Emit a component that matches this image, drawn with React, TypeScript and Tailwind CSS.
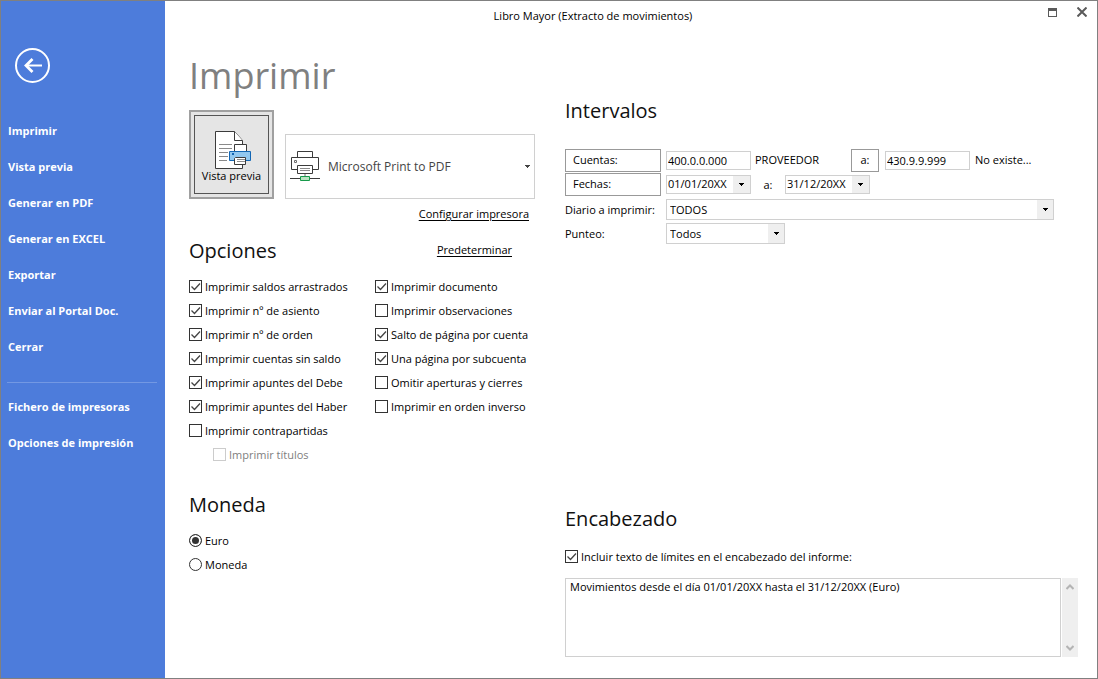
import { useState } from "react"
import type { ReactNode } from "react"

const menuItems = [
  "Imprimir",
  "Vista previa",
  "Generar en PDF",
  "Generar en EXCEL",
  "Exportar",
  "Enviar al Portal Doc.",
  "Cerrar",
]

const setupItems = ["Fichero de impresoras", "Opciones de impresión"]

const leftOptions = [
  { id: "saldos", label: "Imprimir saldos arrastrados", checked: true },
  { id: "asiento", label: "Imprimir nº de asiento", checked: true },
  { id: "orden", label: "Imprimir nº de orden", checked: true },
  { id: "sinsaldo", label: "Imprimir cuentas sin saldo", checked: true },
  { id: "debe", label: "Imprimir apuntes del Debe", checked: true },
  { id: "haber", label: "Imprimir apuntes del Haber", checked: true },
  { id: "contrapartidas", label: "Imprimir contrapartidas", checked: false },
]

const rightOptions = [
  { id: "documento", label: "Imprimir documento", checked: true },
  { id: "observaciones", label: "Imprimir observaciones", checked: false },
  { id: "salto", label: "Salto de página por cuenta", checked: true },
  { id: "subcuenta", label: "Una página por subcuenta", checked: true },
  { id: "omitir", label: "Omitir aperturas y cierres", checked: false },
  { id: "inverso", label: "Imprimir en orden inverso", checked: false },
]

const Arrow = ({ className }: { className?: string }) => (
  <svg width="5" height="3" viewBox="0 0 5 3" className={className} shapeRendering="crispEdges" aria-hidden="true">
    <path d="M0 0h5v1H4v1H3v1H2V2H1V1H0z" fill="currentColor" />
  </svg>
)

const PreviewIcon = () => (
  <svg width="37" height="39" viewBox="0 0 37 39" fill="none" aria-hidden="true">
    <path d="M.5.5h19l8 9v28H.5z" fill="#fff" stroke="#3b3b3b" />
    <path d="M19.5.5v9h8" fill="#fff" stroke="#3b3b3b" />
    <path d="M4 13.5h13M4 17.5h13M4 21.5h9M4 25.5h9M4 29.5h8" stroke="#8a8a8a" />
    <path d="M19.5 20.5v-7h12v7" fill="#fff" stroke="#3b3b3b" />
    <path d="M14.500 20.500h21v9h-21z" fill="#92c8ef" stroke="#1266b4" />
    <path d="M17 22h2v2h-2z" fill="#1266b4" />
    <path d="M20.5 26.500h10v7h-11v-6z" fill="#fff" stroke="#3b3b3b" />
    <path d="M22 28.5h8M22 30.5h8" stroke="#8a8a8a" />
  </svg>
)

const PrinterIcon = () => (
  <svg width="30" height="31" viewBox="0 0 30 31" fill="none" aria-hidden="true">
    <path d="M7.500 6.500v-6h15v6" fill="#fff" stroke="#3b3b3b" />
    <path d="M7 18.500H1.500v-12h27v12H23" fill="#fff" stroke="#3b3b3b" />
    <path d="M4.500 9.500h2v2h-2z" stroke="#6e6e6e" />
    <path d="M7.500 14.500h15v8h-15z" fill="#fff" stroke="#3b3b3b" />
    <path d="M10 17.500h10M10 19.500h10" stroke="#8a8a8a" />
    <path d="M15 23v2" stroke="#b5b5b5" strokeWidth="2" />
    <path d="M0 27.500h30" stroke="#3b3b3b" />
    <path d="M10.500 25.500h9v4h-9z" fill="#b9e3c1" stroke="#179a4b" />
  </svg>
)

const Check = ({
  id,
  label,
  defaultChecked,
  disabled,
}: {
  id: string
  label: string
  defaultChecked?: boolean
  disabled?: boolean
}) => (
  <div className="flex h-6 items-center gap-[3px]">
    <span className="mb-px grid size-[13px]">
      <input
        id={id}
        type="checkbox"
        defaultChecked={defaultChecked}
        disabled={disabled}
        className="peer col-start-1 row-start-1 size-[13px] appearance-none border border-[#333] bg-white disabled:border-[#ccc]"
      />
      <svg
        viewBox="0 0 13 13"
        className="pointer-events-none invisible col-start-1 row-start-1 size-[13px] peer-checked:visible"
        aria-hidden="true"
      >
        <path d="M2.500 6.500l3 3 5.500-6" fill="none" stroke="#444" strokeWidth="1.300" />
      </svg>
    </span>
    <label htmlFor={id} className={disabled ? "whitespace-nowrap text-[#808080]" : "whitespace-nowrap"}>
      {label}
    </label>
  </div>
)

const Radio = ({ id, label, defaultChecked }: { id: string; label: string; defaultChecked?: boolean }) => (
  <div className="flex h-6 items-center gap-[3px]">
    <input
      id={id}
      name="moneda"
      type="radio"
      defaultChecked={defaultChecked}
      className="mb-px size-[13px] appearance-none rounded-full border border-[#333] bg-white checked:bg-[#333] checked:shadow-[inset_0_0_0_2px_#fff]"
    />
    <label htmlFor={id}>{label}</label>
  </div>
)

const Heading = ({ children }: { children: ReactNode }) => (
  <h2 className="h-8 text-xl leading-8 text-[#111]">{children}</h2>
)

const DateBox = ({ label, defaultValue }: { label: string; defaultValue: string }) => (
  <div className="flex h-[19px] w-[85px] border border-[#d0d0d0]">
    <input aria-label={label} defaultValue={defaultValue} className="w-0 flex-1 pl-px outline-none" />
    <button type="button" aria-label={`Abrir ${label}`} className="grid w-[17px] place-items-center bg-[#efefef]">
      <Arrow />
    </button>
  </div>
)

const SelectBox = ({ id, value, className }: { id: string; value: string; className: string }) => (
  <div className={`mb-px grid h-[21px] grid-cols-[1fr_16px] border border-[#d0d0d0] ${className}`}>
    <select id={id} className="col-span-2 col-start-1 row-start-1 appearance-none bg-transparent pl-[3px] outline-none">
      <option>{value}</option>
    </select>
    <span className="pointer-events-none col-start-2 row-start-1 grid place-items-center bg-[#efefef]">
      <Arrow />
    </span>
  </div>
)

const Sidebar = () => (
  <aside className="w-[164px] shrink-0 bg-[#4d7cdb] font-bold text-white">
    <button type="button" aria-label="Volver" className="mt-[47px] ml-3.5 block">
      <svg width="36" height="36" viewBox="0 0 36 36" fill="none" stroke="#fff" aria-hidden="true">
        <circle cx="17.500" cy="17.500" r="16.500" strokeWidth="2" />
        <path d="M27 17.500H11" strokeWidth="2" />
        <path d="M17.500 11L11 17.500l6.500 6.500" strokeWidth="2.800" />
      </svg>
    </button>
    <nav className="mt-[29px]">
      {menuItems.map((item) => (
        <a key={item} href="#" className="block h-9 pl-[7px] leading-9">
          {item}
        </a>
      ))}
      <hr className="mt-[17px] mr-2 ml-1.5 border-[#7398e3]" />
      <div className="mt-1.5">
        {setupItems.map((item) => (
          <a key={item} href="#" className="block h-9 pl-[7px] leading-9">
            {item}
          </a>
        ))}
      </div>
    </nav>
  </aside>
)

const TitleBar = () => (
  <header className="flex h-[30px] items-center">
    <h1 className="flex-1 text-center text-[11px]">Libro Mayor (Extracto de movimientos)</h1>
    <div className="flex w-[76px] justify-end gap-5 pr-2.5 pb-2">
      <button type="button" aria-label="Maximizar">
        <svg width="9" height="9" viewBox="0 0 9 9" shapeRendering="crispEdges" aria-hidden="true">
          <path d="M0 0h9v9H0zM1 3v5h7V3z" fill="#5a5a5a" fillRule="evenodd" />
        </svg>
      </button>
      <button type="button" aria-label="Cerrar ventana">
        <svg width="10" height="10" viewBox="0 0 10 10" aria-hidden="true">
          <path d="M.5.5l9 9M9.500.5l-9 9" stroke="#5a5a5a" strokeWidth="2" />
        </svg>
      </button>
    </div>
  </header>
)

const PrintPanel = () => (
  <section>
    <h2 className="mt-[21px] h-[50px] text-4xl leading-[48px] text-[#808080]">Imprimir</h2>

    <div className="mt-2 flex items-end justify-between">
      <button type="button" className="h-[89px] w-[85px] border-2 border-[#a0a0a0] bg-[#e5e5e5] p-[3px]">
        <span className="flex h-full flex-col items-center border border-[#555] pt-[15px]">
          <span className="pl-1">
            <PreviewIcon />
          </span>
          <span className="leading-3 whitespace-nowrap">Vista previa</span>
        </span>
      </button>
      <button
        type="button"
        aria-haspopup="listbox"
        className="flex h-[65px] w-[250px] items-center border border-[#d0d0d0] pr-1 pl-1 text-[#444]"
      >
        <PrinterIcon />
        <span className="ml-2 flex-1 text-left text-xs">Microsoft Print to PDF</span>
        <Arrow />
      </button>
    </div>

    <div className="mt-[3px] flex h-6 items-center justify-end pr-1.5">
      <a href="#" className="underline underline-offset-2">
        Configurar impresora
      </a>
    </div>

    <div className="mt-[9px] flex items-center justify-between pr-[23px]">
      <Heading>Opciones</Heading>
      <a href="#" className="mb-0.5 underline underline-offset-2">
        Predeterminar
      </a>
    </div>

    <div className="mt-2 grid grid-cols-[186px_1fr]">
      <div>
        {leftOptions.map((option) => (
          <Check key={option.id} id={option.id} label={option.label} defaultChecked={option.checked} />
        ))}
        <div className="pl-6">
          <Check id="titulos" label="Imprimir títulos" disabled />
        </div>
      </div>
      <div>
        {rightOptions.map((option) => (
          <Check key={option.id} id={option.id} label={option.label} defaultChecked={option.checked} />
        ))}
      </div>
    </div>

    <div className="mt-[22px]">
      <Heading>Moneda</Heading>
      <div className="mt-2">
        <Radio id="euro" label="Euro" defaultChecked />
        <Radio id="otra" label="Moneda" />
      </div>
    </div>
  </section>
)

const RangePanel = () => {
  const [text, setText] = useState("Movimientos desde el día 01/01/20XX hasta el 31/12/20XX (Euro)")

  return (
    <section className="flex flex-col pt-16 pb-[21px]">
      <Heading>Intervalos</Heading>
      <div className="mt-[21px] mb-8">
        <div className="flex h-6 items-center">
          <button type="button" className="h-[23px] w-24 border border-[#999] pl-[7px] text-left">
            Cuentas:
          </button>
          <input
            aria-label="Cuenta inicial"
            defaultValue="400.0.0.000"
            className="ml-[5px] h-[19px] w-[85px] border border-[#d0d0d0] pl-px"
          />
          <span className="ml-1 w-24">PROVEEDOR</span>
          <button type="button" className="h-[23px] w-7 border border-[#999]">
            a:
          </button>
          <input
            aria-label="Cuenta final"
            defaultValue="430.9.9.999"
            className="ml-1.5 h-[19px] w-[85px] border border-[#d0d0d0] pl-px"
          />
          <span className="ml-[5px]">No existe...</span>
        </div>
        <div className="flex h-6 items-center">
          <button type="button" className="h-[23px] w-24 border border-[#999] pl-[7px] text-left">
            Fechas:
          </button>
          <div className="ml-[5px]">
            <DateBox label="Fecha inicial" defaultValue="01/01/20XX" />
          </div>
          <span className="w-[34px] pt-0.5 text-center">a:</span>
          <DateBox label="Fecha final" defaultValue="31/12/20XX" />
        </div>
        <div className="mt-0.5 flex h-6 items-center">
          <label htmlFor="diario" className="w-[101px] whitespace-nowrap">
            Diario a imprimir:
          </label>
          <SelectBox id="diario" value="TODOS" className="mr-6 flex-1" />
        </div>
        <div className="flex h-6 items-center">
          <label htmlFor="punteo" className="w-[101px]">
            Punteo:
          </label>
          <SelectBox id="punteo" value="Todos" className="w-[119px]" />
        </div>
      </div>

      <div className="mt-auto">
        <Heading>Encabezado</Heading>
        <div className="mt-2.5">
          <Check id="limites" label="Incluir texto de límites en el encabezado del informe:" defaultChecked />
        </div>
        <div className="mt-[9px] flex h-[79px] gap-px">
          <textarea
            aria-label="Texto del encabezado"
            value={text}
            onChange={(e) => setText(e.target.value)}
            className="flex-1 resize-none overflow-hidden border border-[#d0d0d0] px-1 leading-4 outline-none"
          />
          <div className="flex w-4 flex-col items-center justify-between bg-[#efefef] py-1.5">
            <svg width="8" height="6" viewBox="0 0 8 6" fill="none" aria-hidden="true">
              <path d="M.5 5L4 1.500 7.500 5" stroke="#b4b4b4" strokeWidth="2" />
            </svg>
            <svg width="8" height="6" viewBox="0 0 8 6" fill="none" aria-hidden="true">
              <path d="M.5 1L4 4.500 7.500 1" stroke="#b4b4b4" strokeWidth="2" />
            </svg>
          </div>
        </div>
      </div>
    </section>
  )
}

const App = () => {
  return (
    <div className="flex min-h-screen border border-[#808080] bg-white font-['Open_Sans','Noto_Sans',sans-serif] text-[11px] leading-4 text-black">
      <Sidebar />
      <div className="flex flex-1 flex-col">
        <TitleBar />
        <main className="grid flex-1 grid-cols-[346px_1fr] gap-x-[30px] pr-[19px] pl-6">
          <PrintPanel />
          <RangePanel />
        </main>
      </div>
    </div>
  )
}

export default App
